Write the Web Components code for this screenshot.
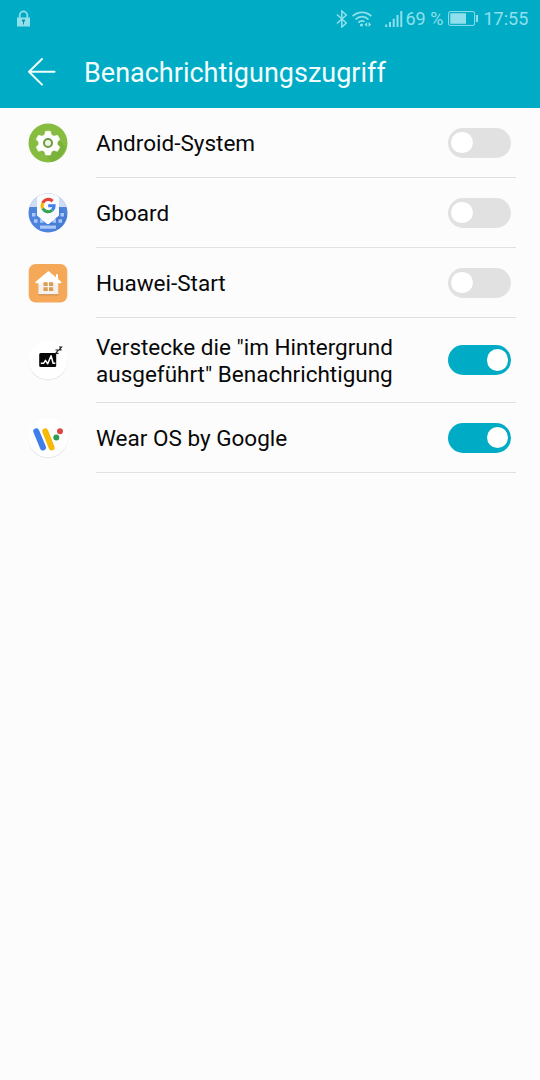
<!DOCTYPE html>
<html lang="de">
<head>
<meta charset="utf-8">
<title>Benachrichtigungszugriff</title>
<style>
  html, body { margin: 0; height: 100%; }
  body {
    background: #fcfcfc;
    color: #080808;
    font-family: Roboto, "Liberation Sans", sans-serif;
    overflow: hidden;
  }
</style>
</head>
<body>
<notification-access></notification-access>

<script>
const ICONS = {
  system: `
    <circle cx="20" cy="20" r="19.5" fill="#86bd41"/>
    <path d="M28 14 37.5 23.5A19.5 19.5 0 0 1 24 39L14 29Z" fill="#7bb33a"/>
    <path transform="translate(-1 -1.2) scale(1.05)" d="M17.7 9h4.600l.9 3.400 2.400 1.400 3.400-1 2.300 4-2.500 2.400v2.500l2.500 2.400-2.300 4-3.400-1-2.400 1.400-.9 3.200h-4.600l-.9-3.200-2.400-1.400-3.400 1-2.300-4 2.500-2.400v-2.500l-2.500-2.400 2.300-4 3.400 1 2.400-1.400Z" fill="#fff" stroke="#fff" stroke-width=".6" stroke-linejoin="round"/>
    <circle cx="20" cy="20" r="4" fill="#eef5e6" stroke="#6b9b3d" stroke-width="2"/>`,
  gboard: `
    <clipPath id="disc"><circle cx="20" cy="20" r="19.5"/></clipPath>
    <g clip-path="url(#disc)">
      <path d="M0 0h40v40H0z" fill="#4d83dc"/>
      <path d="M0 0h40v14H0z" fill="#cfddf4"/>
      <path d="M30.700 14 40 24V40H28L20 30.500Z" fill="#3e6fc4" opacity=".3"/>
      <path d="M4 20h3.500v3.500H4zM32.500 20H36v3.500h-3.500zM6 26.200h3.500v3.500H6zM12 26.200h3.500v3.500H12zM24.500 26.200H28v3.500h-3.500zM30.500 26.200H34v3.500h-3.500zM12 32.400h16v3.400H12z" fill="#a9c8fa"/>
      <path d="M9 0h22v22.500L21.500 30.400q-1.500 1-3 0L9 22.500Z" fill="#fafbfd"/>
    </g>
    <g fill="none" stroke-width="3.100">
      <path d="M24.600 8.200A6 6 0 0 0 14.800 10" stroke="#e54335"/>
      <path d="M14.800 10a6 6 0 0 0 0 5.500" stroke="#f6b704"/>
      <path d="M14.800 15.500a6 6 0 0 0 9.400 1.600" stroke="#34a353"/>
      <path d="M24.200 17.100A6 6 0 0 0 26.100 12.700H20.200" stroke="#4280ef"/>
    </g>`,
  home: `
    <rect x=".7" y="1" width="38.600" height="38.600" rx="7" fill="#f5a857"/>
    <path d="M10.300 20h20v12.300h-20Z" fill="#c98545"/>
    <path d="M10.300 19.500h20V31.200h-20Z" fill="#f5f1ec"/>
    <path d="M20.400 8 28 14.300V11.200h2v4.800l3.200 2.700c.6.600.3 1.500-.6 1.500H8.200c-.9 0-1.200-.9-.6-1.500Z" fill="#fff"/>
    <path d="M15.500 19.200h4.200v3.800h-4.200zM21 19.200h4.200v3.800h-4.200zM15.500 24.200h4.200V28h-4.200zM21 24.200h4.200V28h-4.200z" fill="#d99d55"/>`,
  hide: `
    <circle cx="20" cy="21" r="19.300" fill="#e0e0e0"/>
    <circle cx="20" cy="20" r="19.500" fill="#fff"/>
    <rect x="11.200" y="13" width="17" height="14" rx="1.500" fill="#080808"/>
    <path d="M12.800 23.300h2.700l2-3 2.200 3.500 3.400-8 2 7.500h2.200" fill="none" stroke="#fff" stroke-width="1.500" stroke-linejoin="round"/>
    <path d="M27.500 10h2.800l-2.600 3.300h2.800M31 7h2.500L31.200 9.800h2.400" fill="none" stroke="#222" stroke-width="1.200"/>`,
  wear: `
    <circle cx="20" cy="21" r="19.300" fill="#e0e0e0"/>
    <circle cx="20" cy="20" r="19.500" fill="#fff"/>
    <g fill="none" stroke-linecap="round" stroke-width="6">
      <path d="M17.300 13.300 23.600 29.500" stroke="#f6b90a"/>
      <path d="M8.300 13.300 15 29.500" stroke="#3f7eea"/>
    </g>
    <circle cx="28.300" cy="19.500" r="3" fill="#2f9e50"/>
    <circle cx="32" cy="13.200" r="3" fill="#dc4840"/>`
};

const APPS = [
  { icon: "system", label: "Android-System" },
  { icon: "gboard", label: "Gboard" },
  { icon: "home", label: "Huawei-Start" },
  { icon: "hide", label: 'Verstecke die "im Hintergrund<br>ausgeführt" Benachrichtigung', on: true, tall: true },
  { icon: "wear", label: "Wear OS by Google", on: true }
];

class StatusBar extends HTMLElement {
  constructor() {
    super();
    this.attachShadow({ mode: "open" }).innerHTML = `
<style>
:host {
  display: flex;
  align-items: center;
  box-sizing: border-box;
  height: 37px;
  padding: 0 12px 0 17px;
  background: #00acc5;
  color: #8fe0ec;
  font-size: 18px;
  line-height: 36px;
}
svg { display: block; flex: none; }
.lock { margin-right: auto; }
.wifi { margin: 0 13.500px 0 3.500px; }
.level { width: 37.500px; margin: 0 5px 0 2.500px; white-space: nowrap; }
.time { width: 44.500px; margin: 0 0 0 5.500px; white-space: nowrap; }
</style>
<svg class="lock" width="13" height="17" viewBox="0 0 13 17">
  <path d="M2.700 8V5.200a3.800 3.800 0 0 1 7.600 0V8" fill="none" stroke="#8fe0ec" stroke-width="1.700"/>
  <path d="M0 7.500h13V16.500H0Z" fill="#8fe0ec"/>
  <path d="M5 9.500h3v2H7v3H6v-3H5Z" fill="#168fa5"/>
</svg>
<svg width="12" height="18" viewBox="0 0 12 18" fill="none" stroke="#8fe0ec" stroke-width="1.500">
  <path d="M1 4.500 10.300 13 5.800 17V1l4.500 4L1 13.500"/>
</svg>
<svg class="wifi" width="20" height="18" viewBox="0 0 20 18" fill="none" stroke="#8fe0ec" stroke-width="1.800">
  <path d="M.7 6.200a13 13 0 0 1 18.600 0M3.500 9.500a9 9 0 0 1 13 0M6.500 12.500a5 5 0 0 1 6-.8"/>
  <circle cx="9.500" cy="15" r="1.600" fill="#8fe0ec" stroke="none"/>
  <path d="M15.200 12v5l-2.700-2.500ZM16.500 12v5l2.700-2.500Z" fill="#8fe0ec" stroke="none"/>
</svg>
<svg width="18" height="18" viewBox="0 0 18 18" fill="#8fe0ec">
  <path d="M.2 14.500h2V17h-2zM4 12h2v5H4zM7.700 8.700h2V17h-2zM11.500 5h2v12h-2zM15.300 1h2v16h-2z"/>
</svg>
<span class="level">69 %</span>
<svg width="30" height="15" viewBox="0 0 30 15">
  <rect x=".6" y=".6" width="26" height="13.800" rx="1.500" fill="none" stroke="#8fe0ec"/>
  <path d="M2.300 2.300h15.700v10.400H2.300zM28 4h2v7h-2z" fill="#8fe0ec"/>
</svg>
<span class="time">17:55</span>`;
  }
}
customElements.define("status-bar", StatusBar);

class TitleBar extends HTMLElement {
  constructor() {
    super();
    this.attachShadow({ mode: "open" }).innerHTML = `
<style>
:host {
  display: flex;
  align-items: center;
  box-sizing: border-box;
  height: 71px;
  padding-left: 27px;
  background: #00acc5;
  color: #f4fdfe;
  font-size: 27px;
  line-height: 71px;
}
svg { display: block; margin: -1px 28px 0 0; }
h1 { margin: 2px 0 0; font: inherit; white-space: nowrap; }
</style>
<svg width="29" height="30" viewBox="0 0 29 30" fill="none" stroke="#f4fdfe" stroke-width="2" stroke-linecap="round" stroke-linejoin="round">
  <path d="M15 2 2 14.800 15 27.600M2 14.800h25.500"/>
</svg>
<h1><slot></slot></h1>`;
  }
}
customElements.define("title-bar", TitleBar);

class AppIcon extends HTMLElement {
  connectedCallback() {
    this.attachShadow({ mode: "open" }).innerHTML = `
<style>
:host { display: block; flex: none; width: 40px; height: 41px; }
svg { display: block; }
</style>
<svg width="40" height="41" viewBox="0 0 40 41">${ICONS[this.getAttribute("name")]}</svg>`;
  }
}
customElements.define("app-icon", AppIcon);

class ToggleSwitch extends HTMLElement {
  constructor() {
    super();
    this.attachShadow({ mode: "open" }).innerHTML = `
<style>
:host {
  display: flex;
  flex: none;
  align-items: center;
  box-sizing: border-box;
  width: 63px;
  height: 30px;
  padding: 0 3px;
  border-radius: 15px;
  background: #e1e1e1;
}
:host([on]) {
  justify-content: flex-end;
  background: #00acc5;
}
i {
  width: 21.500px;
  height: 21.500px;
  border-radius: 50%;
  background: #fff;
}
</style>
<i></i>`;
  }
}
customElements.define("toggle-switch", ToggleSwitch);

class AppRow extends HTMLElement {
  constructor() {
    super();
    this.attachShadow({ mode: "open" }).innerHTML = `
<style>
:host {
  display: flex;
  align-items: center;
  height: 70px;
  padding: 0 24px 0 28px;
  font-size: 22.500px;
  line-height: 26.500px;
}
:host([tall]) { height: 85px; }
.main {
  display: flex;
  align-items: center;
  box-sizing: border-box;
  flex: 1;
  height: 100%;
  margin-left: 28px;
  padding-right: 5px;
  border-bottom: 1px solid #e0e0e0;
}
.label { flex: 1; padding-top: 1px; white-space: nowrap; }
</style>
<slot name="icon"></slot>
<div class="main">
  <div class="label"><slot></slot></div>
  <slot name="switch"></slot>
</div>`;
  }
}
customElements.define("app-row", AppRow);

class NotificationAccess extends HTMLElement {
  constructor() {
    super();
    const rows = APPS.map(app => `
<app-row ${app.tall ? "tall" : ""}>
  <app-icon slot="icon" name="${app.icon}"></app-icon>
  <span>${app.label}</span>
  <toggle-switch slot="switch" ${app.on ? "on" : ""}></toggle-switch>
</app-row>`).join("");

    this.attachShadow({ mode: "open" }).innerHTML = `
<style>
:host { display: flex; flex-direction: column; width: 540px; height: 1080px; }
</style>
<status-bar></status-bar>
<title-bar>Benachrichtigungszugriff</title-bar>
<main>${rows}</main>`;
  }
}
customElements.define("notification-access", NotificationAccess);
</script>
</body>
</html>
